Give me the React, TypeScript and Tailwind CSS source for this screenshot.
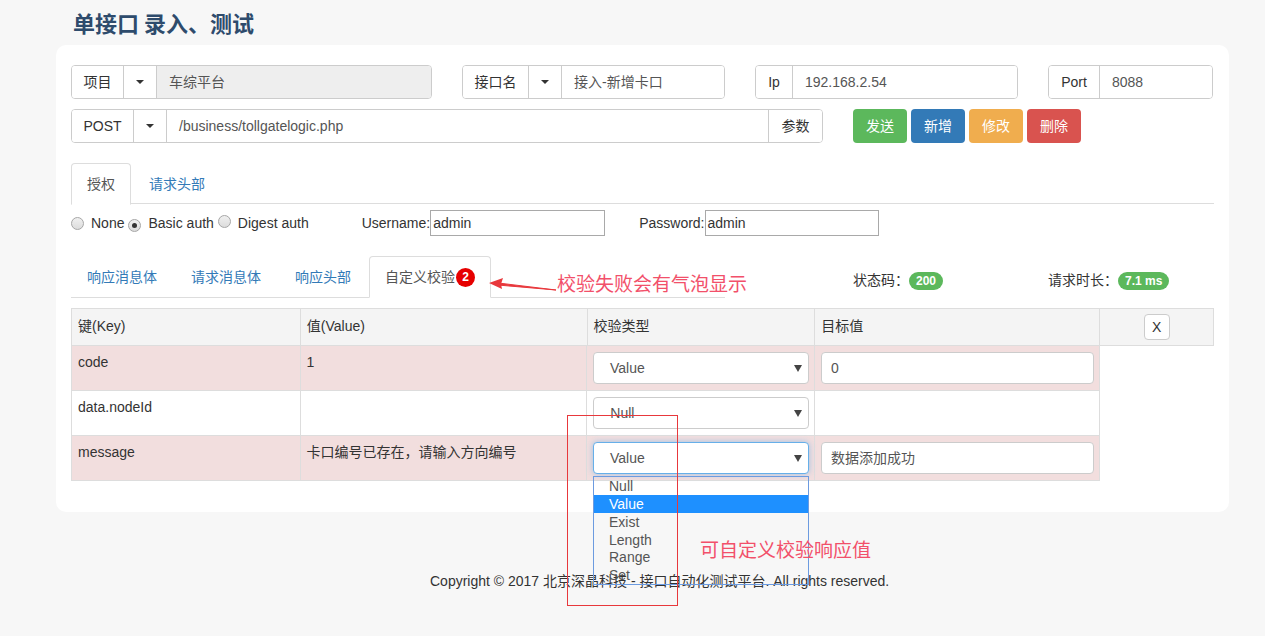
import React from "react";

const Caret = () => (
  <span className="inline-block w-0 h-0 border-x-[4px] border-x-transparent border-t-[4px] border-t-[#333]" />
);

const SelectCaret = () => (
  <span className="inline-block w-0 h-0 border-x-[4px] border-x-transparent border-t-[7px] border-t-[#444]" />
);

type GroupProps = {
  label: string;
  value: string;
  width: string;
  caret?: boolean;
  disabled?: boolean;
  labelW: string;
  button?: string;
};

const InputGroup: React.FC<GroupProps> = ({ label, value, width, caret, disabled, labelW, button }) => (
  <div className={`flex h-[34px] border border-[#ccc] rounded-[4px] overflow-hidden ${width}`}>
    <div className={`flex items-center justify-center text-[#333] border-r border-[#ccc] bg-white ${labelW}`}>{label}</div>
    {caret && (
      <div className="flex items-center justify-center w-[33px] border-r border-[#ccc] bg-white">
        <Caret />
      </div>
    )}
    <div className={`flex-1 flex items-center px-[12px] text-[#555] ${disabled ? "bg-[#eee]" : "bg-white"}`}>{value}</div>
    {button && (
      <div className="flex items-center justify-center w-[54px] border-l border-[#ccc] bg-white text-[#333]">{button}</div>
    )}
  </div>
);

const Radio = ({ checked }: { checked?: boolean }) => (
  <span className="inline-flex items-center justify-center w-[13px] h-[13px] rounded-full border border-[#a6a6a6] bg-gradient-to-b from-[#f0f0f0] to-[#dcdcdc]">
    {checked && <span className="w-[5px] h-[5px] rounded-full bg-[#333]" />}
  </span>
);

const Tab = ({ text, active, children }: { text: string; active?: boolean; children?: React.ReactNode }) => (
  <div
    className={`mr-[2px] -mb-px flex items-center h-[42px] px-[15px] rounded-t-[4px] border ${
      active ? "bg-white border-[#ddd] border-b-white text-[#555]" : "border-transparent text-[#337ab7]"
    }`}
  >
    {text}
    {children}
  </div>
);

const cell = "border-r border-b border-[#ddd] px-[6px]";

const rows = [
  { key: "code", val: "1", type: "Value", target: "0", pink: true },
  { key: "data.nodeId", val: "", type: "Null", target: null, pink: false },
  { key: "message", val: "卡口编号已存在，请输入方向编号", type: "Value", target: "数据添加成功", pink: true, focus: true },
];

export default function App() {
  return (
    <div className="relative min-h-[636px] bg-[#f7f7f7] text-[14px] text-[#333] font-['Liberation_Sans','Noto_Sans_CJK_SC',sans-serif]">
      <h1 className="h-[45px] pl-[73px] pt-[6px] text-[22px] leading-[32px] font-bold text-[#2e4b6c] font-['Noto_Sans_CJK_SC',serif]">
        单接口 录入、测试
      </h1>

      <div className="ml-[56px] w-[1173px] bg-white rounded-[10px] px-[15px] pt-[20px] pb-[31px]">
        {/* top inputs */}
        <div className="flex gap-[30px]">
          <InputGroup label="项目" labelW="w-[52px]" caret value="车综平台" width="w-[361px]" disabled />
          <InputGroup label="接口名" labelW="w-[66px]" caret value="接入-新增卡口" width="w-[263px]" />
          <InputGroup label="Ip" labelW="w-[37px]" value="192.168.2.54" width="w-[263px]" />
          <InputGroup label="Port" labelW="w-[51px]" value="8088" width="w-[165px]" />
        </div>
        <div className="flex mt-[10px]">
          <InputGroup label="POST" labelW="w-[62px]" caret value="/business/tollgatelogic.php" width="w-[752px]" button="参数" />
          <div className="flex gap-[4px] ml-[30px]">
            <button className="w-[54px] h-[34px] rounded-[4px] bg-[#5cb85c] text-white">发送</button>
            <button className="w-[54px] h-[34px] rounded-[4px] bg-[#337ab7] text-white">新增</button>
            <button className="w-[54px] h-[34px] rounded-[4px] bg-[#f0ad4e] text-white">修改</button>
            <button className="w-[54px] h-[34px] rounded-[4px] bg-[#d9534f] text-white">删除</button>
          </div>
        </div>

        {/* auth tabs */}
        <div className="flex mt-[20px] border-b border-[#ddd] h-[41px]">
          <Tab text="授权" active />
          <Tab text="请求头部" />
        </div>
        <div className="flex items-center h-[26px] mt-[6px]">
          <Radio />
          <span className="ml-[7px]">None</span>
          <span className="ml-[4px]"><Radio checked /></span>
          <span className="ml-[7px]">Basic auth</span>
          <span className="ml-[4px]"><Radio /></span>
          <span className="ml-[7px]">Digest auth</span>
          <span className="ml-[53px]">Username:</span>
          <div className="w-[175px] h-[26px] border border-[#a9a9a9] flex items-center px-[2px]">admin</div>
          <span className="ml-[34px]">Password:</span>
          <div className="w-[174px] h-[26px] border border-[#a9a9a9] flex items-center px-[2px]">admin</div>
        </div>

        {/* response tabs */}
        <div className="flex items-end mt-[20px]">
          <div className="flex w-[654px] border-b border-[#ddd]">
            <Tab text="响应消息体" />
            <Tab text="请求消息体" />
            <Tab text="响应头部" />
            <Tab text="自定义校验" active>
              <span className="ml-px w-[19px] h-[19px] rounded-full bg-[#e60000] text-white text-[12px] font-bold flex items-center justify-center">2</span>
            </Tab>
          </div>
          <div className="flex items-center w-[195px] ml-[128px] pb-[7px]">
            <span>状态码：</span>
            <span className="h-[18px] px-[7px] rounded-full bg-[#5cb85c] text-white text-[12px] font-bold flex items-center">200</span>
          </div>
          <div className="flex items-center pb-[7px]">
            <span>请求时长：</span>
            <span className="h-[18px] px-[7px] rounded-full bg-[#5cb85c] text-white text-[12px] font-bold flex items-center">7.1 ms</span>
          </div>
        </div>

        {/* table */}
        <div className="mt-[10px] w-[1143px]">
          <div className="flex h-[38px] bg-[#f4f4f4] border-t border-l border-[#ddd]">
            <div className={`${cell} w-[229px] pt-[7px] px-[6px]`}>键(Key)</div>
            <div className={`${cell} w-[287px] pt-[7px]`}>值(Value)</div>
            <div className={`${cell} w-[228px] pt-[7px]`}>校验类型</div>
            <div className={`${cell} w-[285px] pt-[7px]`}>目标值</div>
            <div className={`${cell} w-[114px] flex items-center justify-center`}>
              <div className="w-[26px] h-[26px] bg-white border border-[#ccc] rounded-[4px] flex items-center justify-center">X</div>
            </div>
          </div>
          {rows.map((r) => (
            <div key={r.key} className={`flex h-[45px] w-[1029px] border-l border-[#ddd] ${r.pink ? "bg-[#f2dede]" : "bg-white"}`}>
              <div className={`${cell} w-[229px] pt-[6px]`}>{r.key}</div>
              <div className={`${cell} w-[287px] pt-[6px]`}>{r.val}</div>
              <div className={`${cell} w-[228px] pt-[6px]`}>
                <div
                  className={`w-[216px] h-[32px] rounded-[4px] bg-white border flex items-center justify-between pl-[16px] pr-[6px] text-[#555] ${
                    r.focus ? "border-[#66afe9] shadow-[0_0_6px_rgba(102,175,233,0.6)]" : "border-[#ccc]"
                  }`}
                >
                  <span>{r.type}</span>
                  <SelectCaret />
                </div>
              </div>
              <div className={`${cell} w-[285px] pt-[6px]`}>
                {r.target !== null && (
                  <div className="w-[273px] h-[32px] rounded-[4px] bg-white border border-[#ccc] flex items-center px-[9px] text-[#555]">
                    {r.target}
                  </div>
                )}
              </div>
            </div>
          ))}
        </div>
      </div>

      <div className="mt-[59px] pl-[430px] leading-[20px] text-[#333]">
        Copyright © 2017 北京深晶科技 - 接口自动化测试平台. All rights reserved.
      </div>

      {/* open select list */}
      <div className="absolute left-[593px] top-[476px] w-[216px] h-[109px] border border-[#6c9be0] text-[#555] leading-[18px]">
        <div className="pl-[15px] h-[18px]">Null</div>
        <div className="pl-[15px] h-[18px] bg-[#1e90ff] text-white">Value</div>
        <div className="pl-[15px] h-[18px]">Exist</div>
        <div className="pl-[15px] h-[17px]">Length</div>
        <div className="pl-[15px] h-[18px]">Range</div>
        <div className="pl-[15px] h-[18px]">Set</div>
      </div>

      {/* annotations */}
      <div className="absolute left-[567px] top-[415px] w-[111px] h-[191px] border border-[#e8383c]" />
      <div className="absolute left-[700px] top-[536px] text-[19px] leading-[26px] text-[#f2506a] font-['Noto_Sans_CJK_SC',serif]">
        可自定义校验响应值
      </div>
      <svg className="absolute left-[486px] top-[275px]" width="72" height="20" viewBox="0 0 72 20">
        <path d="M70 15 L14 8.2 L14 10.2 Z" fill="#e8383c" stroke="#e8383c" strokeWidth="1" />
        <path d="M3 8 L17 3 L15 9 L16 14 Z" fill="#e8383c" />
      </svg>
      <div className="absolute left-[557px] top-[270px] text-[19px] leading-[26px] text-[#f2506a] font-['Noto_Sans_CJK_SC',serif]">
        校验失败会有气泡显示
      </div>
    </div>
  );
}
